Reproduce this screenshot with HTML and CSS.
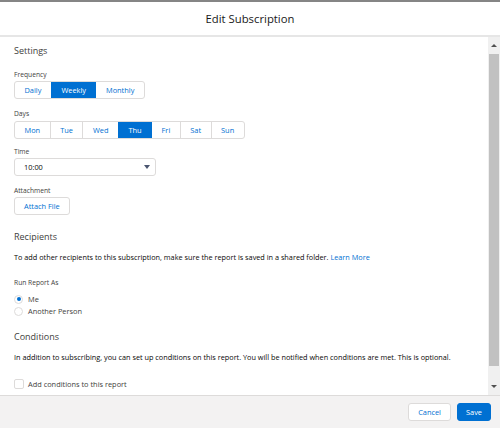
FILE: index.html
```html
<!DOCTYPE html>
<html>
<head>
<meta charset="utf-8">
<link rel="stylesheet" href="styles.css">
</head>
<body>
<div class="modal">
  <div class="header"><h1 class="title">Edit Subscription</h1></div>
  <div class="body">
    <div class="content">
      <h2 class="heading h-settings">Settings</h2>
      <div class="field f-freq">
        <div class="label">Frequency</div>
        <div class="group">
          <span class="seg">Daily</span><span class="seg on">Weekly</span><span class="seg">Monthly</span>
        </div>
      </div>
      <div class="field f-days">
        <div class="label">Days</div>
        <div class="group">
          <span class="seg">Mon</span><span class="seg">Tue</span><span class="seg">Wed</span><span class="seg on">Thu</span><span class="seg">Fri</span><span class="seg">Sat</span><span class="seg">Sun</span>
        </div>
      </div>
      <div class="field f-time">
        <div class="label">Time</div>
        <div class="select"><span>10:00</span><span class="caret"></span></div>
      </div>
      <div class="field f-att">
        <div class="label">Attachment</div>
        <span class="btn">Attach File</span>
      </div>
      <h2 class="heading h-rec">Recipients</h2>
      <p class="text t-rec">To add other recipients to this subscription, make sure the report is saved in a shared folder. <span class="link">Learn More</span></p>
      <div class="label l-run">Run Report As</div>
      <div class="radio r-first"><span class="dot checked"></span><span>Me</span></div>
      <div class="radio"><span class="dot"></span><span>Another Person</span></div>
      <h2 class="heading h-cond">Conditions</h2>
      <p class="text t-cond">In addition to subscribing, you can set up conditions on this report. You will be notified when conditions are met. This is optional.</p>
      <div class="check"><span class="box"></span><span>Add conditions to this report</span></div>
    </div>
    <div class="scrollbar">
      <div class="arrow up"></div>
      <div class="track"><div class="thumb"></div></div>
      <div class="arrow down"></div>
    </div>
  </div>
  <div class="footer">
    <span class="btn fbtn">Cancel</span>
    <span class="btn fbtn primary">Save</span>
  </div>
</div>
</body>
</html>
```
FILE: styles.css
```css
* { box-sizing: border-box; }
html, body { margin: 0; padding: 0; }
body {
  width: 500px;
  height: 428px;
  overflow: hidden;
  background: #ffffff;
  font-family: "Open Sans", "Noto Sans", sans-serif;
  color: #080707;
}
.modal {
  display: flex;
  flex-direction: column;
  height: 428px;
  border-top: 2px solid #858585;
}
.header {
  height: 35px;
  border-bottom: 2px solid #e6e6e6;
  display: flex;
  align-items: center;
  justify-content: center;
}
.title {
  margin: 0;
  font-size: 11.3px;
  font-weight: 400;
  color: #181818;
  line-height: 14px;
}
.body {
  height: 359px;
  display: flex;
  border-bottom: 1px solid #dddbda;
}
.content {
  flex: 1;
  padding: 7px 0 0 14px;
}
.heading {
  margin: 0;
  font-size: 9px;
  font-weight: 400;
  line-height: 14px;
  color: #3e3e3c;
}
.label {
  font-size: 6.7px;
  line-height: 10px;
  color: #3e3e3c;
  margin-bottom: 1px;
}
.field { display: flex; flex-direction: column; align-items: flex-start; }
.f-freq { margin-top: 12px; }
.f-days { margin-top: 10px; }
.f-days .label { margin-bottom: 2px; }
.f-time { margin-top: 8px; }
.f-att { margin-top: 10px; }
.group {
  display: inline-flex;
  height: 18px;
  border: 1px solid #dddbda;
  border-radius: 3px;
  overflow: hidden;
}
.seg {
  display: flex;
  align-items: center;
  padding: 0 9.5px;
  font-size: 7.4px;
  color: #0070d2;
  border-left: 1px solid #dddbda;
}
.seg:first-child { border-left: none; }
.seg.on { background: #0070d2; color: #ffffff; border-left-color: #0070d2; }
.seg.on + .seg { border-left-color: #0070d2; }
.select {
  width: 142px;
  height: 18px;
  border: 1px solid #dddbda;
  border-radius: 3px;
  display: flex;
  align-items: center;
  justify-content: space-between;
  padding: 0 5px 0 9px;
  font-size: 7.4px;
  color: #080707;
}
.caret {
  width: 0; height: 0;
  border-left: 3px solid transparent;
  border-right: 3px solid transparent;
  border-top: 4px solid #4a5570;
}
.btn {
  display: inline-flex;
  align-items: center;
  justify-content: center;
  height: 18px;
  padding: 0 9px;
  border: 1px solid #dddbda;
  border-radius: 3px;
  background: #ffffff;
  color: #0070d2;
  font-size: 7.4px;
}
.h-rec { margin-top: 15px; }
.text {
  margin: 0;
  font-size: 7.3px;
  line-height: 12px;
  color: #080707;
}
.link { color: #0070d2; }
.t-rec { margin-top: 7px; }
.l-run { margin-top: 15px; margin-bottom: 0; }
.radio, .check {
  display: flex;
  align-items: center;
  height: 12px;
  font-size: 7.4px;
  color: #3e3e3c;
}
.r-first { margin-top: 5px; }
.dot {
  width: 9px; height: 9px;
  border: 1px solid #dddbda;
  border-radius: 50%;
  margin-right: 5px;
  position: relative;
  background: #ffffff;
}
.dot.checked::after {
  content: "";
  position: absolute;
  left: 1.5px; top: 1.5px;
  width: 4px; height: 4px;
  border-radius: 50%;
  background: #0070d2;
}
.h-cond { margin-top: 13px; }
.t-cond { margin-top: 7px; }
.check { margin-top: 15px; }
.box {
  width: 10px; height: 10px;
  border: 1px solid #dddbda;
  border-radius: 2px;
  margin-right: 4px;
  background: #ffffff;
}
.scrollbar {
  width: 12px;
  display: flex;
  flex-direction: column;
  background: #f0f0f0;
}
.arrow {
  height: 17px;
  display: flex;
  align-items: center;
  justify-content: center;
}
.arrow::before {
  content: "";
  width: 0; height: 0;
  border-left: 3px solid transparent;
  border-right: 3px solid transparent;
}
.up::before { border-bottom: 3px solid #505050; }
.down::before { border-top: 3px solid #505050; }
.track { flex: 1; display: flex; flex-direction: column; }
.thumb {
  height: 312px;
  margin: 0 1px;
  background: #c1c1c1;
}
.footer {
  flex: 1;
  background: #f3f2f2;
  display: flex;
  justify-content: flex-end;
  align-items: flex-start;
  padding: 7px 9px 0 0;
  gap: 6px;
}
.fbtn { padding: 0 9px; }
.primary { background: #0070d2; border-color: #0070d2; color: #ffffff; padding: 0 8px; }
```
